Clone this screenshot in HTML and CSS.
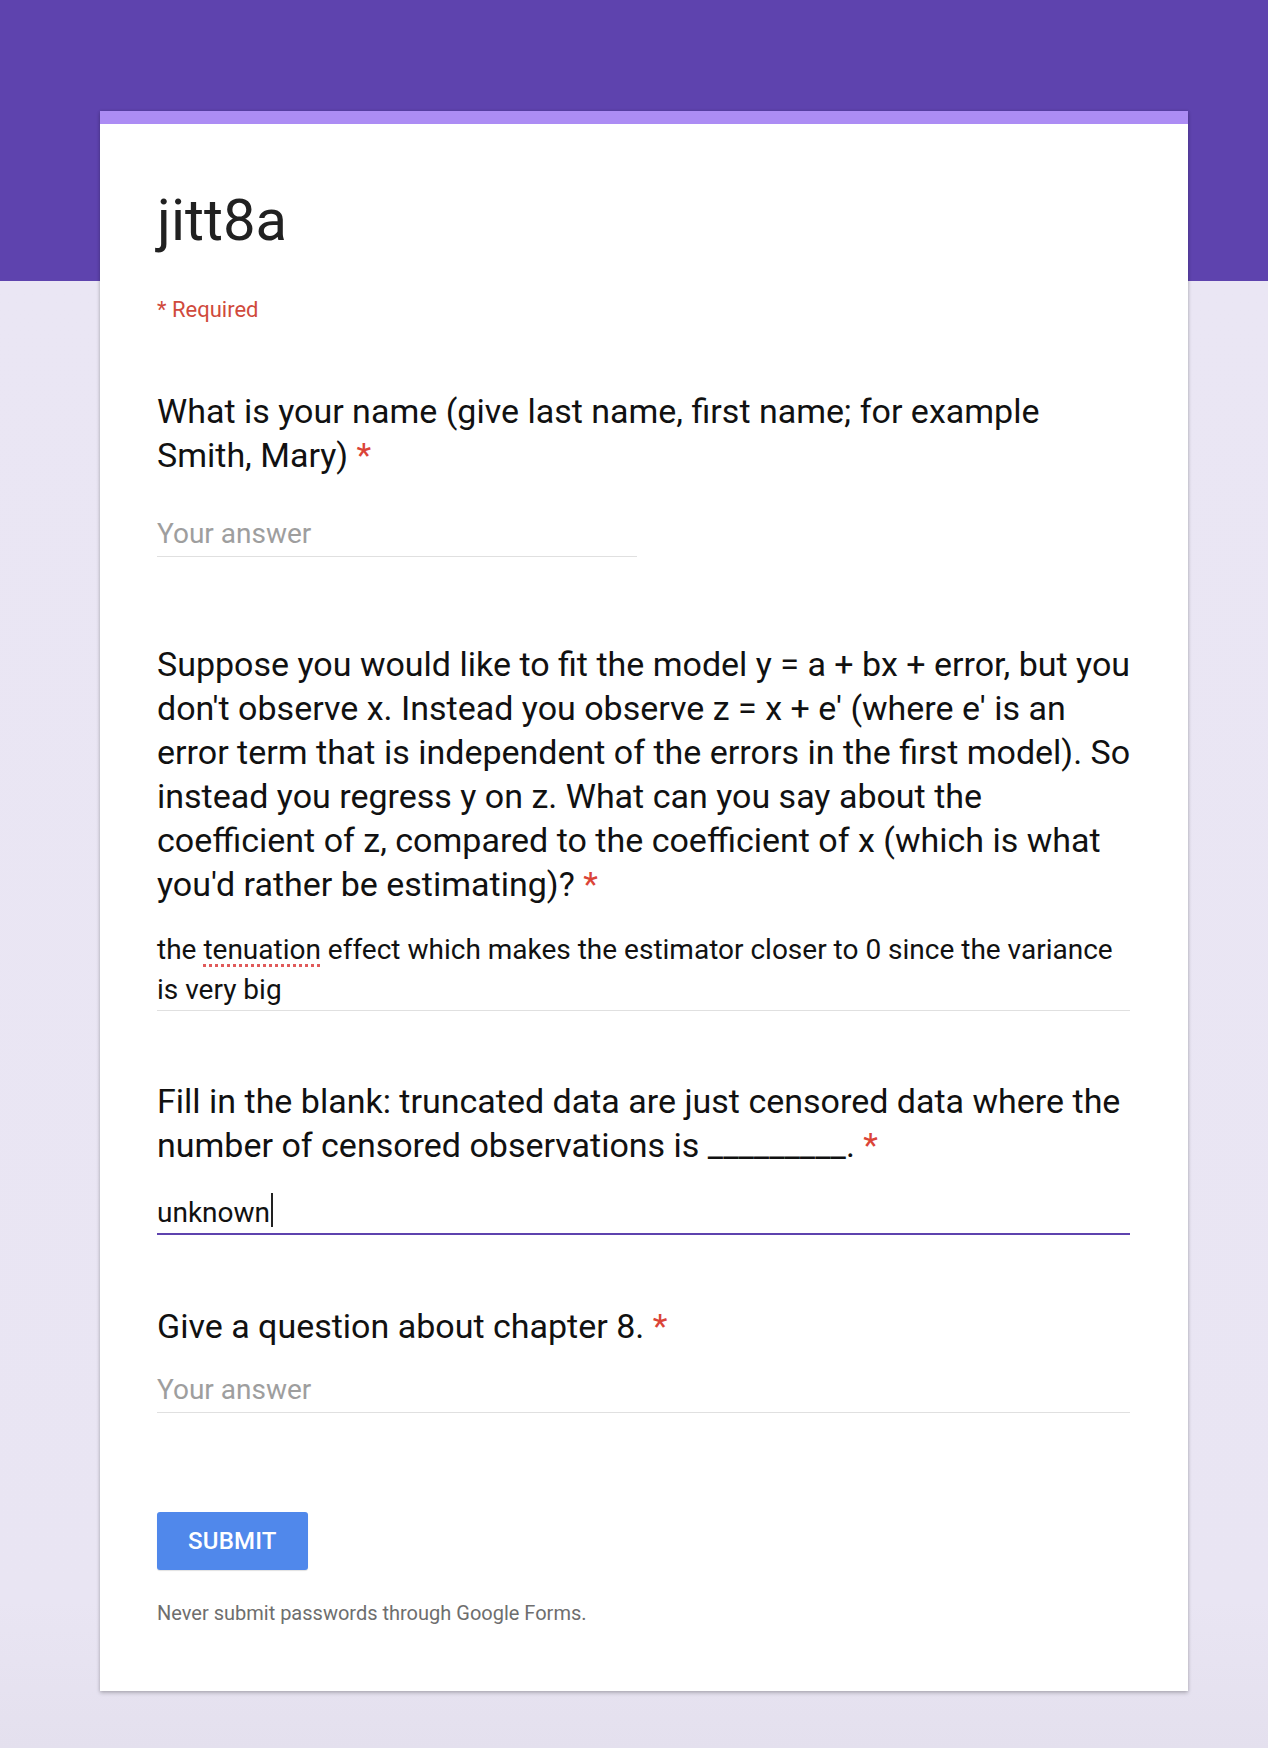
FILE: index.html
```html
<!DOCTYPE html>
<html lang="en">
<head>
<meta charset="utf-8">
<title>jitt8a</title>
<link rel="stylesheet" href="styles.css">
</head>
<body>
<div class="page">
  <main class="card">
    <header class="form-head">
      <h1 class="form-title">jitt8a</h1>
      <p class="required-note">* Required</p>
    </header>

    <section class="item item-q1">
      <div class="q-title">What is your name (give last name, first name; for example Smith, Mary) <span class="ast">*</span></div>
      <div class="field field-narrow field-q1 placeholder">Your answer</div>
    </section>

    <section class="item item-q2">
      <div class="q-title">Suppose you would like to fit the model y = a + bx + error, but you don't observe x. Instead you observe z = x + e' (where e' is an error term that is independent of the errors in the first model). So instead you regress y on z. What can you say about the coefficient of z, compared to the coefficient of x (which is what you'd rather be estimating)? <span class="ast">*</span></div>
      <div class="para-field">the <span class="misspelled">tenuation</span> effect which makes the estimator closer to 0 since the variance is very big</div>
    </section>

    <section class="item item-q3">
      <div class="q-title">Fill in the blank: truncated data are just censored data where the number of censored observations is _________. <span class="ast">*</span></div>
      <div class="field field-focused">unknown<span class="caret"></span></div>
    </section>

    <section class="item item-q4">
      <div class="q-title">Give a question about chapter 8. <span class="ast">*</span></div>
      <div class="field field-q4 placeholder">Your answer</div>
    </section>

    <div class="actions">
      <button class="submit-btn" type="button">SUBMIT</button>
    </div>
    <p class="footer-note">Never submit passwords through Google Forms.</p>
  </main>
</div>
</body>
</html>
```
FILE: styles.css
```css
html, body {
  margin: 0;
  padding: 0;
}

body {
  font-family: Roboto, "Liberation Sans", Arial, sans-serif;
  background: #e9e5f3;
}

.page {
  min-height: 1748px;
  box-sizing: border-box;
  padding-top: 111px;
  padding-bottom: 57px;
  background: linear-gradient(to bottom,
    #5e43ae 0, #5e43ae 281px,
    #eae6f4 281px, #e9e5f3 1600px, #e4e0ee 1748px);
}

.card {
  width: 1088px;
  margin-left: 100px;
  box-sizing: border-box;
  background: #fff;
  border-top: 13px solid #ac8cf4;
  padding: 61px 58px 66px 57px;
  box-shadow: 0 2px 4px rgba(0, 0, 0, 0.22), 0 0 3px rgba(0, 0, 0, 0.12);
}

.form-title {
  margin: 0;
  font-size: 58px;
  line-height: 70px;
  font-weight: 400;
  color: #212121;
}

.required-note {
  margin: 40px 0 0;
  font-size: 22px;
  line-height: 30px;
  color: #d04a3c;
}

.q-title {
  font-size: 34px;
  line-height: 44px;
  color: #111;
  margin-right: -8px;
}

.ast {
  color: #db4437;
}

.item-q1 { margin-top: 64px; }
.item-q2 { margin-top: 85px; }
.item-q3 { margin-top: 68px; }
.item-q4 { margin-top: 69px; }

.field {
  font-size: 28px;
  line-height: 36px;
  padding-bottom: 4px;
  border-bottom: 1px solid #e0e0e0;
  color: #111;
}

.field-narrow {
  width: 480px;
}

.field-q1 { margin-top: 39px; }
.field-q4 { margin-top: 24px; }

.placeholder {
  color: #9e9e9e;
}

.field-focused {
  margin-top: 26px;
  padding-bottom: 2px;
  border-bottom: 2px solid #5e43ae;
}

.caret {
  display: inline-block;
  width: 2px;
  height: 34px;
  margin-left: 1px;
  background: #222;
  vertical-align: -5px;
}

.para-field {
  margin-top: 24px;
  font-size: 28px;
  line-height: 40px;
  color: #111;
  border-bottom: 1px solid #e0e0e0;
}

.misspelled {
  text-decoration: underline dotted #e05a5a;
  text-decoration-thickness: 3px;
  text-underline-offset: 5px;
}

.actions {
  margin-top: 99px;
}

.submit-btn {
  display: block;
  height: 58px;
  padding: 0 31px;
  border: 0;
  border-radius: 3px;
  background: #5088eb;
  color: #fff;
  font-family: Roboto, "Liberation Sans", Arial, sans-serif;
  font-size: 24px;
  font-weight: 500;
  letter-spacing: 0.2px;
  box-shadow: 0 1px 1px rgba(0, 0, 0, 0.12);
}

.footer-note {
  margin: 31px 0 0;
  font-size: 20px;
  line-height: 24px;
  color: #6e6e6e;
}
```
